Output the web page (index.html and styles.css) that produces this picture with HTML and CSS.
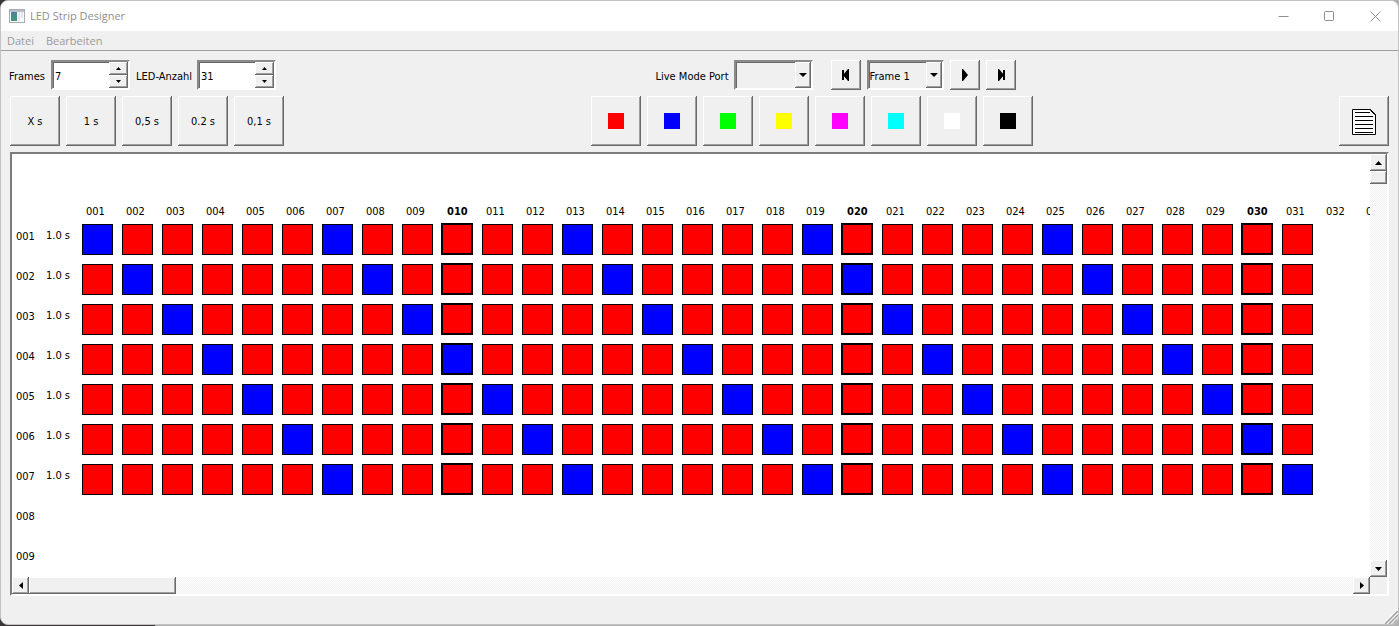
FILE: index.html
```html
<!DOCTYPE html>
<html lang="de">
<head>
<meta charset="utf-8">
<title>LED Strip Designer</title>
<link rel="stylesheet" href="styles.css">
</head>
<body>
<div class="window">
  <header class="titlebar">
    <svg class="app-icon" width="16" height="14" viewBox="0 0 16 14" aria-hidden="true">
      <defs><linearGradient id="g" x1="0" y1="0" x2="0" y2="1"><stop offset="0" stop-color="#4f7fa0"/><stop offset="1" stop-color="#3f9a72"/></linearGradient></defs>
      <rect x=".5" y=".5" width="15" height="13" fill="#fafafa" stroke="#a9adb2"/>
      <rect x="1" y="1" width="14" height="2" fill="#b9bfc6"/>
      <rect x="2" y="3" width="6" height="9" fill="url(#g)"/>
      <rect x="9" y="3" width="2" height="9" fill="#dfe6ee"/>
      <rect x="12" y="3" width="2" height="6" fill="#dde3ea"/>
    </svg>
    <h1 class="title">LED Strip Designer</h1>
    <div class="window-controls">
      <button class="caption" type="button" aria-label="Minimieren"><svg width="11" height="11" viewBox="0 0 11 11"><path d="M.5 5.500h10"/></svg></button>
      <button class="caption" type="button" aria-label="Maximieren"><svg width="11" height="11" viewBox="0 0 11 11"><rect x=".5" y=".5" width="9" height="9" rx="1"/></svg></button>
      <button class="caption" type="button" aria-label="Schließen"><svg width="11" height="11" viewBox="0 0 11 11"><path d="M.5.5l10 10M10.500.5l-10 10"/></svg></button>
    </div>
  </header>

  <nav class="menubar">
    <button class="menu" type="button">Datei</button>
    <button class="menu" type="button">Bearbeiten</button>
  </nav>

  <main class="content">
    <div class="row settings">
      <div class="group">
        <label class="label frames-label" for="frames">Frames</label>
        <div class="spin">
          <input class="spin-input" id="frames" type="text" inputmode="numeric" value="7">
          <div class="spin-buttons">
            <button class="raised step" type="button" aria-label="Mehr Frames"><svg width="5" height="3" viewBox="0 0 5 3"><path d="M0 3h5L2.500 0z"/></svg></button>
            <button class="raised step" type="button" aria-label="Weniger Frames"><svg width="5" height="3" viewBox="0 0 5 3"><path d="M0 0h5L2.500 3z"/></svg></button>
          </div>
        </div>
        <label class="label count-label" for="count">LED-Anzahl</label>
        <div class="spin">
          <input class="spin-input" id="count" type="text" inputmode="numeric" value="31">
          <div class="spin-buttons">
            <button class="raised step" type="button" aria-label="Mehr LEDs"><svg width="5" height="3" viewBox="0 0 5 3"><path d="M0 3h5L2.500 0z"/></svg></button>
            <button class="raised step" type="button" aria-label="Weniger LEDs"><svg width="5" height="3" viewBox="0 0 5 3"><path d="M0 0h5L2.500 3z"/></svg></button>
          </div>
        </div>
      </div>
      <div class="group centered">
        <label class="label port-label" for="port">Live Mode Port</label>
        <div class="combo port">
          <select class="combo-select" id="port"><option></option></select>
          <span class="raised combo-arrow"><svg width="8" height="4" viewBox="0 0 8 4"><path d="M0 0h8L4 4z"/></svg></span>
        </div>
        <button class="raised nav" type="button" aria-label="Vorheriger Frame"><svg width="8" height="12" viewBox="0 0 8 12"><path d="M0 1h2v10H0zM1 6l5-6h1v12H6z"/></svg></button>
        <div class="combo frame">
          <select class="combo-select" id="frame" aria-label="Frame"><option>Frame 1</option></select>
          <span class="raised combo-arrow"><svg width="8" height="4" viewBox="0 0 8 4"><path d="M0 0h8L4 4z"/></svg></span>
        </div>
        <button class="raised nav" type="button" aria-label="Abspielen"><svg width="6" height="12" viewBox="0 0 6 12"><path d="M0 0h1l5 6-5 6H0z"/></svg></button>
        <button class="raised nav" type="button" aria-label="Nächster Frame"><svg width="8" height="12" viewBox="0 0 8 12"><path d="M1 0h1l5 6-5 6H1zM6 1h2v10H6z"/></svg></button>
      </div>
    </div>

    <div class="row tools">
      <div class="group">
        <button class="raised tool lowered" type="button">X s</button>
        <button class="raised tool lowered" type="button">1 s</button>
        <button class="raised tool lowered" type="button">0,5 s</button>
        <button class="raised tool lowered" type="button">0.2 s</button>
        <button class="raised tool lowered" type="button">0,1 s</button>
      </div>
      <div class="group">
        <button class="raised tool" type="button" aria-label="Rot"><span class="swatch red"></span></button>
        <button class="raised tool" type="button" aria-label="Blau"><span class="swatch blue"></span></button>
        <button class="raised tool" type="button" aria-label="Grün"><span class="swatch green"></span></button>
        <button class="raised tool" type="button" aria-label="Gelb"><span class="swatch yellow"></span></button>
        <button class="raised tool" type="button" aria-label="Magenta"><span class="swatch magenta"></span></button>
        <button class="raised tool" type="button" aria-label="Cyan"><span class="swatch cyan"></span></button>
        <button class="raised tool" type="button" aria-label="Weiß"><span class="swatch white"></span></button>
        <button class="raised tool" type="button" aria-label="Schwarz"><span class="swatch black"></span></button>
      </div>
      <button class="raised tool lowered" type="button" aria-label="Code anzeigen">
        <svg width="24" height="26" viewBox="0 0 24 26"><path d="M.5.5h18l5 5v20H.5z" fill="#fff" stroke="#000"/><path d="M18.500.5v1l4 4h1" fill="none" stroke="#000"/><path d="M3 3.500h15M3 7.500h18M3 11.500h18M3 15.500h18M3 19.500h18M3 23.500h18" stroke="#000"/></svg>
      </button>
    </div>

    <section class="scroll-frame" aria-label="LED-Matrix">
      <div class="viewport">
        <table class="matrix">
          <thead><tr id="head"></tr></thead>
          <tbody id="body"></tbody>
        </table>
      </div>
      <div class="track vertical">
        <button class="raised scroll-button" type="button" aria-label="Nach oben"><svg width="7" height="4" viewBox="0 0 7 4"><path d="M0 4h7L3.500 0z"/></svg></button>
        <div class="raised thumb-vertical"></div>
        <button class="raised scroll-button last" type="button" aria-label="Nach unten"><svg width="7" height="4" viewBox="0 0 7 4"><path d="M0 0h7L3.500 4z"/></svg></button>
      </div>
      <div class="track horizontal">
        <button class="raised scroll-button" type="button" aria-label="Nach links"><svg width="4" height="7" viewBox="0 0 4 7"><path d="M4 0v7L0 3.500z"/></svg></button>
        <div class="raised thumb-horizontal"></div>
        <button class="raised scroll-button last" type="button" aria-label="Nach rechts"><svg width="4" height="7" viewBox="0 0 4 7"><path d="M0 0v7l4-3.500z"/></svg></button>
      </div>
    </section>
  </main>

  <footer class="statusbar">
    <svg width="13" height="13" viewBox="0 0 13 13" aria-hidden="true"><path d="M0 13L13 0M5 13l8-8M10 13l3-3" stroke="#fff" stroke-width="1" transform="translate(-1 -1)"/><path d="M0 13L13 0M4 13l9-9M8 13l5-5" stroke="#a0a0a0" stroke-width="1.500"/></svg>
  </footer>
</div>
<script src="app.js"></script>
</body>
</html>
```

FILE: styles.css
```css
* { box-sizing: border-box; }

html, body { height: 100%; }

body {
  margin: 0;
  padding-bottom: 1px;
  background: linear-gradient(to right, #3a3638 155px, #b0b0b0 155px);
  color: #000;
  font: 11px/14px "DejaVu Sans Condensed", "Noto Sans", sans-serif;
}

button, input, select { font: inherit; color: inherit; }

button {
  display: flex;
  align-items: center;
  justify-content: center;
  margin: 0;
  padding: 0;
  border: 0;
  background: none;
}

.window {
  display: flex;
  flex-direction: column;
  height: 100%;
  overflow: hidden;
  border: 1px solid #c3c3c3;
  border-radius: 8px;
  background: #f0f0f0;
}

.titlebar {
  display: flex;
  align-items: center;
  height: 30px;
  padding-left: 8px;
  background: #fff;
  color: #8f8f8f;
}

.title {
  flex: 1;
  margin: 0 0 0 5px;
  font: 11px/16px "Open Sans", "Noto Sans", sans-serif;
}

.window-controls { display: flex; }
.caption { width: 46px; height: 30px; }
.caption svg { fill: none; stroke: #8f8f8f; }

.menubar {
  display: flex;
  gap: 12px;
  height: 20px;
  padding-left: 6px;
  border-bottom: 1px solid #a0a0a0;
}

.menu {
  color: #9a9a9a;
  font: 11px/16px "Open Sans", "Noto Sans", sans-serif;
}

.content {
  display: flex;
  flex: 1;
  flex-direction: column;
  gap: 6px;
  min-height: 0;
  padding: 9px 9px 0;
}

.row, .group { display: flex; align-items: center; gap: 6px; }
.settings { height: 30px; margin-left: -1px; }
.settings .centered { margin: 0 auto; }
.tools { justify-content: space-between; }

.label { padding-top: 3px; white-space: nowrap; }
.frames-label { width: 36px; }
.count-label { width: 55px; }
.port-label { width: 72px; }

.raised {
  background: #f0f0f0;
  box-shadow: inset -1px -1px #696969, inset 1px 1px #fff, inset -2px -2px #a0a0a0;
}

.tool { width: 50px; height: 50px; }
.lowered { padding-top: 2px; }
.nav { width: 30px; height: 30px; }

.spin, .combo {
  display: flex;
  height: 30px;
  border: 2px solid;
  border-color: #8a8a8a #fff #fff #8a8a8a;
  box-shadow: inset 1px 1px #696969;
}

.spin { width: 79px; background: #fff; }

.spin-input {
  flex: 1;
  min-width: 0;
  padding: 3px 0 0 2px;
  border: 0;
  background: none;
}

.spin-buttons { display: flex; flex-direction: column; width: 19px; }
.step { flex: 1; }

.combo { position: relative; }
.port { width: 79px; margin-right: 12px; }
.frame { width: 77px; }

.combo-select {
  flex: 1;
  width: 100%;
  padding: 3px 0 0 1px;
  border: 0;
  appearance: none;
  background: none;
}

.combo-arrow {
  position: absolute;
  top: 0;
  right: 0;
  bottom: 0;
  display: flex;
  align-items: center;
  justify-content: center;
  width: 16px;
  pointer-events: none;
}

.swatch { width: 16px; height: 16px; }
.red { background: #f00; }
.blue { background: #00f; }
.green { background: #0f0; }
.yellow { background: #ff0; }
.magenta { background: #f0f; }
.cyan { background: #0ff; }
.white { background: #fff; }
.black { background: #000; }

.scroll-frame {
  display: grid;
  flex: 1;
  grid-template: minmax(0, 1fr) 17px / minmax(0, 1fr) 17px;
  min-height: 0;
  border: 2px solid;
  border-color: #7c7c7c #fff #fff #7c7c7c;
}

.viewport { overflow: hidden; background: #fff; }

.matrix {
  width: 1390px;
  border-collapse: collapse;
  table-layout: fixed;
}

.matrix th, .matrix td {
  width: 40px;
  height: 40px;
  padding: 0;
  font-weight: normal;
  text-align: left;
  vertical-align: top;
  white-space: nowrap;
}

.matrix thead th { height: 66px; padding: 51px 0 0 4px; }
.matrix thead .major { padding-left: 5px; font-weight: bold; }
.matrix .number { width: 34px; padding-left: 4px; line-height: 34px; }
.matrix .time { width: 36px; line-height: 32px; }

.led {
  width: 31px;
  height: 31px;
  margin-top: 4px;
  border: 1px solid #000;
}

/* every tenth LED has a heavier frame that grows up and to the left */
.major .led {
  width: 32px;
  height: 32px;
  margin: 3px 0 0 -1px;
  border-width: 2px;
}

.track {
  display: flex;
  background: repeating-conic-gradient(#fff 0 25%, #f0f0f0 0 50%) 0 0 / 2px 2px;
}

.vertical { flex-direction: column; }
.scroll-button { width: 17px; height: 17px; }
.last { margin-top: auto; }
.horizontal .last { margin: 0 0 0 auto; }
.thumb-vertical { height: 13px; }
.thumb-horizontal { width: 147px; }

.statusbar {
  display: flex;
  align-items: flex-end;
  justify-content: flex-end;
  height: 28px;
}
```

FILE: app.js
```javascript
const FRAMES = 7;
const LEDS = 31;
const VISIBLE_ROWS = 9;
const VISIBLE_COLUMNS = 33;

const pad = (n) => String(n).padStart(3, "0");

function cell(tag, className, text) {
  const node = document.createElement(tag);
  if (className) node.className = className;
  if (text) node.textContent = text;
  return node;
}

const head = document.getElementById("head");
head.append(cell("td", "number"), cell("td", "time"));
for (let led = 1; led <= VISIBLE_COLUMNS; led++) {
  head.append(cell("th", led % 10 ? "" : "major", pad(led)));
}

const body = document.getElementById("body");
for (let frame = 1; frame <= VISIBLE_ROWS; frame++) {
  const row = document.createElement("tr");
  row.append(cell("th", "number", pad(frame)));
  if (frame <= FRAMES) {
    row.append(cell("td", "time", "1.0 s"));
    for (let led = 1; led <= LEDS; led++) {
      const offset = led - frame;
      const lit = offset >= 0 && offset <= 24 && offset % 6 === 0;
      const button = cell("button", "led " + (lit ? "blue" : "red"));
      button.type = "button";
      button.setAttribute("aria-label", `Frame ${frame}, LED ${led}`);
      const td = cell("td", led % 10 ? "" : "major");
      td.append(button);
      row.append(td);
    }
  }
  body.append(row);
}
```
